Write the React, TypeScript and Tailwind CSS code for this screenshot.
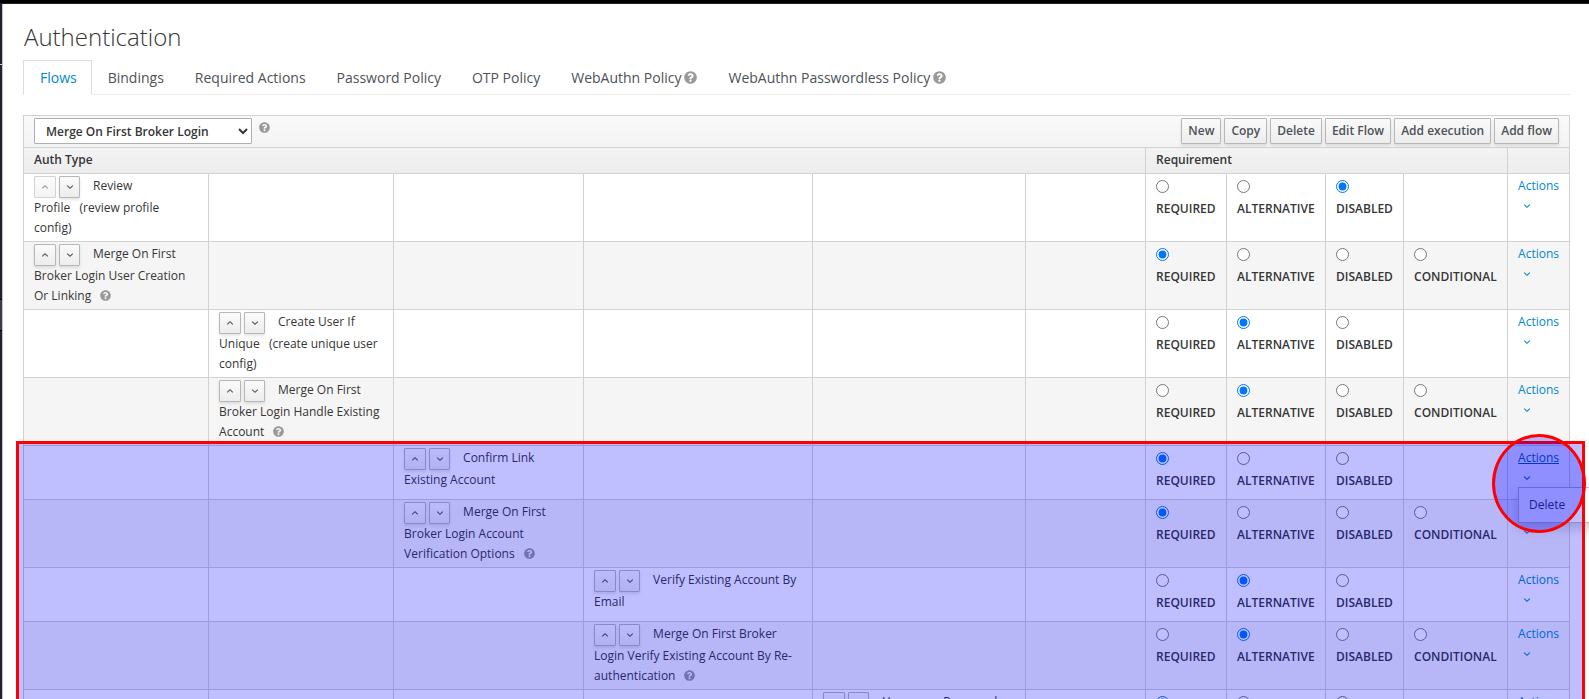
import type { ReactNode } from "react";
import { FaQuestionCircle } from "react-icons/fa";

type Requirement = "REQUIRED" | "ALTERNATIVE" | "DISABLED" | "CONDITIONAL";

interface Execution {
  name: string;
  alias?: string;
  level: number;
  requirement: Requirement;
  choices: Requirement[];
  help?: boolean;
  first?: boolean;
  menuOpen?: boolean;
}

const EXECUTOR: Requirement[] = ["REQUIRED", "ALTERNATIVE", "DISABLED"];
const SUBFLOW: Requirement[] = ["REQUIRED", "ALTERNATIVE", "DISABLED", "CONDITIONAL"];
const LEVELS = [0, 1, 2, 3, 4, 5];

const executions: Execution[] = [
  { name: "Review Profile", alias: "(review profile config)", level: 0, requirement: "DISABLED", choices: EXECUTOR, first: true },
  { name: "Merge On First Broker Login User Creation Or Linking", level: 0, requirement: "REQUIRED", choices: SUBFLOW, help: true },
  { name: "Create User If Unique", alias: "(create unique user config)", level: 1, requirement: "ALTERNATIVE", choices: EXECUTOR },
  { name: "Merge On First Broker Login Handle Existing Account", level: 1, requirement: "ALTERNATIVE", choices: SUBFLOW, help: true },
  { name: "Confirm Link Existing Account", level: 2, requirement: "REQUIRED", choices: EXECUTOR, menuOpen: true },
  { name: "Merge On First Broker Login Account Verification Options", level: 2, requirement: "REQUIRED", choices: SUBFLOW, help: true },
  { name: "Verify Existing Account By Email", level: 3, requirement: "ALTERNATIVE", choices: EXECUTOR },
  { name: "Merge On First Broker Login Verify Existing Account By Re-authentication", level: 3, requirement: "ALTERNATIVE", choices: SUBFLOW, help: true },
  { name: "Username Password Form for reauthentication", level: 4, requirement: "REQUIRED", choices: EXECUTOR },
];

const tabs = [
  { label: "Flows", active: true },
  { label: "Bindings" },
  { label: "Required Actions" },
  { label: "Password Policy" },
  { label: "OTP Policy" },
  { label: "WebAuthn Policy", help: true },
  { label: "WebAuthn Passwordless Policy", help: true },
];

const toolbar = ["New", "Copy", "Delete", "Edit Flow", "Add execution", "Add flow"];

const buttonLook =
  "border border-[#b7b7b7] rounded-[1px] bg-linear-to-b from-[#fafafa] to-[#ededed] text-[#4d5258] shadow-[0_2px_3px_rgba(3,3,3,0.1)]";

function Angle({ up = false }: { up?: boolean }) {
  return (
    <svg viewBox="0 0 8 6" className="inline-block h-[6px] w-[8px]" fill="none" stroke="currentColor" strokeWidth="1.1" aria-hidden="true">
      <path d={up ? "M1.2 4.4 4 1.7l2.8 2.7" : "M1.2 1.6 4 4.3l2.8-2.7"} />
    </svg>
  );
}

function MoveButton({ up = false, disabled = false }: { up?: boolean; disabled?: boolean }) {
  return (
    <button
      type="button"
      disabled={disabled}
      aria-label={up ? "Move up" : "Move down"}
      className={`inline-flex h-[22px] items-center justify-center align-middle ${up ? "w-[22px]" : "w-[21px]"} ${buttonLook} disabled:opacity-60 disabled:shadow-none`}
    >
      <Angle up={up} />
    </button>
  );
}

function Cell({ children }: { children?: ReactNode }) {
  return <td className="border border-[#d1d1d1] px-[10px] pt-[2px] pb-[3px] align-top">{children}</td>;
}

function ExecutionRow({ item, index }: { item: Execution; index: number }) {
  return (
    <tr className="even:bg-[#f5f5f5]">
      {LEVELS.map((level) => (
        <Cell key={level}>
          {level === item.level && (
            <>
              <span className="mr-[13px] inline-flex gap-[3px] align-middle">
                <MoveButton up disabled={item.first} />
                <MoveButton />
              </span>
              {item.alias ? `${item.name}\u00a0\u00a0\u00a0${item.alias}` : item.name}
              {item.help && <FaQuestionCircle className="ml-[9px] inline-block h-[11px] w-[11px] align-[-1px] text-[#999]" />}
            </>
          )}
        </Cell>
      ))}
      {SUBFLOW.map((choice) => (
        <Cell key={choice}>
          {item.choices.includes(choice) && (
            <label className="mt-[4px] mb-[5px] block font-semibold">
              <input
                type="radio"
                name={`requirement-${index}`}
                defaultChecked={item.requirement === choice}
                className="mb-[6px] block h-[13px] w-[13px]"
              />
              {choice}
            </label>
          )}
        </Cell>
      ))}
      <Cell>
        <div className="relative">
          <a href="#actions" className={`block ${item.menuOpen ? "text-[#00659c] underline" : "text-[#0088ce]"}`}>
            Actions
            <span className="block h-[20px] pl-[5px] leading-[18px]">
              <Angle />
            </span>
          </a>
          {item.menuOpen && (
            <ul className="absolute top-[39px] left-0 z-10 w-[160px] border border-[#bbb] bg-white py-[5px] shadow-[0_6px_12px_rgba(0,0,0,0.175)]">
              <li>
                <a href="#delete" className="block px-[10px] py-[2px]">Delete</a>
              </li>
            </ul>
          )}
        </div>
      </Cell>
    </tr>
  );
}

export default function App() {
  return (
    <div className="relative flex h-screen flex-col overflow-hidden bg-white font-['Open_Sans',sans-serif] text-[12px] leading-[20px] text-[#363636]">
      <div className="h-[4px] shrink-0 border-b border-[#222] bg-black" />
      <div className="flex min-h-0 flex-1">
        <div className="flex w-[3px] shrink-0 flex-col border-r border-[#c4c4c8] bg-[#1f222c]">
          <div className="h-[61px] border-b border-[#d0d0d0]" />
          <div className="mt-[234px] h-[32px] border-y border-black bg-[#3a3e46]" />
        </div>
        <main className="min-w-0 flex-1 pt-[20px] pr-[19px] pl-[20px]">
          <h1 className="pl-px text-[24px] leading-[26px] font-light">Authentication</h1>

          <nav className="mt-[10px] flex border-b border-[#ededed] text-[14px]">
            {tabs.map((tab) => (
              <a
                key={tab.label}
                href="#tab"
                className={`-mr-px -mb-px flex h-[35px] items-center gap-[3px] border pr-[14px] pl-[16px] ${
                  tab.active ? "border-[#dcdcdc] border-b-white text-[#0088ce]" : "border-transparent text-[#4d5258]"
                }`}
              >
                {tab.label}
                {tab.help && <FaQuestionCircle className="h-[13px] w-[13px] text-[#999]" />}
              </a>
            ))}
          </nav>

          <table className="mt-[20px] w-full table-fixed border-collapse">
            <colgroup>
              <col className="w-[11.97%]" />
              <col className="w-[11.97%]" />
              <col className="w-[12.29%]" />
              <col className="w-[14.81%]" />
              <col className="w-[13.78%]" />
              <col className="w-[7.76%]" />
              <col className="w-[5.24%]" />
              <col className="w-[6.4%]" />
              <col className="w-[5.05%]" />
              <col className="w-[6.73%]" />
              <col className="w-[4%]" />
            </colgroup>
            <thead className="bg-linear-to-b from-[#fafafa] to-[#ededed] text-left font-semibold">
              <tr>
                <th colSpan={11} className="border border-[#d1d1d1] px-[10px] py-[2px]">
                  <div className="flex h-[27px] items-start">
                    <select
                      aria-label="Flow"
                      className="h-[26px] w-[218px] rounded-[1px] border border-[#b0b0b0] bg-white pl-[7px] text-[12px] font-semibold"
                    >
                      <option>Merge On First Broker Login</option>
                    </select>
                    <FaQuestionCircle className="mt-[4px] ml-[7px] h-[11px] w-[11px] text-[#999]" />
                    <div className="ml-auto flex gap-[3px]">
                      {toolbar.map((label) => (
                        <button key={label} type="button" className={`h-[26px] px-[6px] font-semibold ${buttonLook}`}>
                          {label}
                        </button>
                      ))}
                    </div>
                  </div>
                </th>
              </tr>
              <tr>
                <th colSpan={6} className="border border-[#d1d1d1] px-[10px] pt-[2px] pb-[3px] font-semibold">Auth Type</th>
                <th colSpan={4} className="border border-[#d1d1d1] px-[10px] pt-[2px] pb-[3px] font-semibold">Requirement</th>
                <th className="border border-[#d1d1d1]" aria-label="Actions" />
              </tr>
            </thead>
            <tbody>
              {executions.map((item, index) => (
                <ExecutionRow key={item.name} item={item} index={index} />
              ))}
            </tbody>
          </table>
        </main>
      </div>

      <div className="pointer-events-none absolute top-[441px] right-[4px] bottom-[-3px] left-[16px] z-20 border-3 border-[#f00] bg-[#0000ff40]" />
      <div className="pointer-events-none absolute top-[434px] right-[3px] z-20 h-[99px] w-[94px] rounded-[50%] border-3 border-[#f00] bg-[#0000ff40]" />
    </div>
  );
}
